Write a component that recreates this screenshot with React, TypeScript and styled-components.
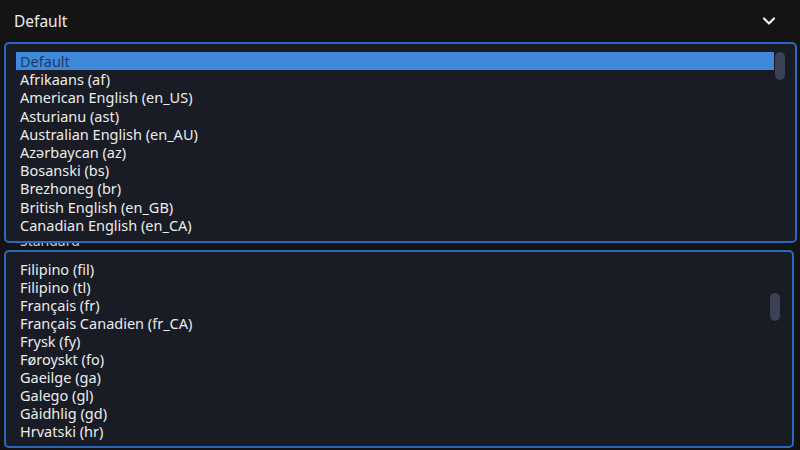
import React from "react";
import styled, { createGlobalStyle } from "styled-components";

const Global = createGlobalStyle`
  html, body { margin: 0; padding: 0; background: #131313; }
  body { font-family: "Noto Sans", "DejaVu Sans", sans-serif; color: #ececec; }
`;

const Page = styled.div`
  width: 800px;
  height: 450px;
  overflow: hidden;
  display: flex;
  flex-direction: column;
  background: #131313;
`;

const SelectBar = styled.div`
  height: 42px;
  flex: none;
  display: flex;
  align-items: center;
  justify-content: space-between;
  padding: 0 24px 0 14px;
  box-sizing: border-box;
  background: #141414;
  font-size: 15.5px;
  color: #eeeeee;
`;

const ListBox = styled.div<{ $w: number; $h: number }>`
  width: ${(p) => p.$w}px;
  height: ${(p) => p.$h}px;
  margin-left: 4px;
  box-sizing: border-box;
  flex: none;
  border: 2px solid #2b68bd;
  border-radius: 5px;
  background: #191c25;
  display: flex;
  padding: 8px 0 0 10px;
  overflow: hidden;
`;

const Items = styled.div`
  flex: 1;
  display: flex;
  flex-direction: column;
`;

const Item = styled.div<{ $sel?: boolean; $h: number }>`
  height: ${(p) => p.$h}px;
  line-height: ${(p) => p.$h}px;
  padding-left: 4px;
  font-size: 14.5px;
  white-space: nowrap;
  color: ${(p) => (p.$sel ? "#1a3b6a" : "#ececec")};
  background: ${(p) => (p.$sel ? "#3f88da" : "transparent")};
`;

const Track = styled.div<{ $w: number; $top: number; $left: number }>`
  width: ${(p) => p.$w}px;
  flex: none;
  box-sizing: border-box;
  padding-top: ${(p) => p.$top}px;
  padding-left: ${(p) => p.$left}px;
  display: flex;
  justify-content: flex-start;
`;

const Thumb = styled.div<{ $h: number }>`
  width: 10px;
  height: ${(p) => p.$h}px;
  border-radius: 5px;
  background: #3a4253;
`;

const Gap = styled.div`
  height: 7px;
  flex: none;
  overflow: hidden;
  display: flex;
  align-items: flex-end;
  padding-left: 20px;
`;

const HiddenLabel = styled.div`
  font-size: 14px;
  line-height: 18px;
  height: 18px;
  flex: none;
  color: #c8ccd4;
`;

const first = [
  "Default",
  "Afrikaans (af)",
  "American English (en_US)",
  "Asturianu (ast)",
  "Australian English (en_AU)",
  "Azərbaycan (az)",
  "Bosanski (bs)",
  "Brezhoneg (br)",
  "British English (en_GB)",
  "Canadian English (en_CA)",
];

const second = [
  "Filipino (fil)",
  "Filipino (tl)",
  "Français (fr)",
  "Français Canadien (fr_CA)",
  "Frysk (fy)",
  "Føroyskt (fo)",
  "Gaeilge (ga)",
  "Galego (gl)",
  "Gàidhlig (gd)",
  "Hrvatski (hr)",
];

const Chevron = () => (
  <svg width="14" height="10" viewBox="0 0 14 10">
    <path d="M2 2.5 L7 7.5 L12 2.5" fill="none" stroke="#eeeeee" strokeWidth="2.2" strokeLinecap="round" strokeLinejoin="round" />
  </svg>
);

export default function App() {
  return (
    <Page>
      <Global />
      <SelectBar>
        <span>Default</span>
        <Chevron />
      </SelectBar>
      <ListBox $w={793} $h={201}>
        <Items>
          {first.map((t, i) => (
            <Item key={t} $h={18.2} $sel={i === 0}>
              {t}
            </Item>
          ))}
        </Items>
        <Track $w={21} $top={0} $left={1}>
          <Thumb $h={28} />
        </Track>
      </ListBox>
      <Gap>
        <HiddenLabel>Standard</HiddenLabel>
      </Gap>
      <ListBox $w={790} $h={198}>
        <Items>
          {second.map((t) => (
            <Item key={t} $h={18}>
              {t}
            </Item>
          ))}
        </Items>
        <Track $w={22} $top={33} $left={0}>
          <Thumb $h={28} />
        </Track>
      </ListBox>
    </Page>
  );
}
